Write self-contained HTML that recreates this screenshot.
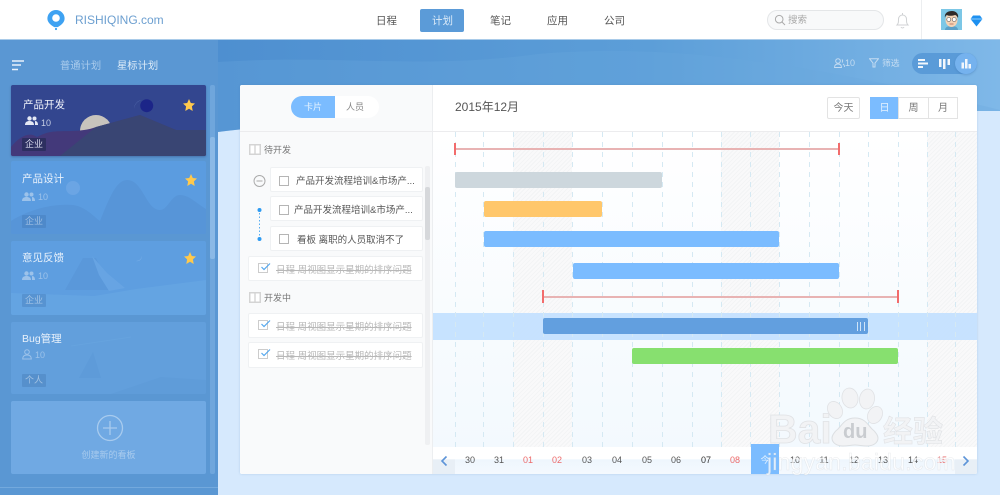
<!DOCTYPE html>
<html lang="zh">
<head>
<meta charset="utf-8">
<title>RISHIQING</title>
<style>
*{box-sizing:border-box;margin:0;padding:0}
html,body{width:1000px;height:495px;overflow:hidden}
body{position:relative;background:#d6e9fd;font-family:"Liberation Sans","Noto Sans CJK SC",sans-serif;color:#555}
.a{position:absolute}
.t{position:absolute;white-space:nowrap;line-height:1}
#top{left:0;top:0;width:1000px;height:40px;background:#fff;border-bottom:1px solid #a9cbe9}
.nav{position:absolute;top:15px;font-size:10.5px;line-height:12px;color:#555;white-space:nowrap}
#side{left:0;top:40px;width:218px;height:455px;background:#5a97d3;overflow:hidden}
.card{position:absolute;left:11px;width:195px;border-radius:2px;overflow:hidden;background:#5b9ce0}
.card>svg{position:absolute;left:0;top:0}
.tag{position:absolute;left:11px;width:24px;height:13px;background:rgba(60,110,170,.3);border-radius:1px;color:rgba(255,255,255,.45);font-size:9px;line-height:13px;text-align:center}
.ct{position:absolute;left:11px;font-size:10.5px;line-height:12px;color:#e8f1fb;white-space:nowrap}
.cn{position:absolute;left:27px;font-size:9px;line-height:10px;color:rgba(255,255,255,.45)}
#panel{left:240px;top:85px;width:737px;height:389px;background:#fff;border-radius:2px;overflow:hidden;box-shadow:0 0 2px rgba(70,120,170,.25)}
#left{left:0;top:0;width:193px;height:389px;background:#f9fafb;border-right:1px solid #eceef0}
.tc{position:absolute;height:25px;background:#fff;border:1px solid #eff1f3;border-radius:2px}
.chk{position:absolute;width:10px;height:10px;border:1px solid #b5b5b5;background:#fff}
.tt{position:absolute;top:8px;font-size:9.5px;line-height:11px;color:#555;white-space:nowrap}
.done{color:#b8b8b8;text-decoration:line-through;font-size:9.5px;line-height:11px;top:8px;left:27px;position:absolute;white-space:nowrap}
.d{position:absolute;top:370px;width:30px;text-align:center;font-size:9px;line-height:10px;color:#555}
.r{color:#ec6a6a}
.vl{position:absolute;top:47px;height:320px;width:1px;background:repeating-linear-gradient(#d5e9f3 0,#d5e9f3 5px,transparent 5px,transparent 10px)}
.hat{position:absolute;top:47px;height:315px;background:repeating-linear-gradient(135deg,#f3f4f5 0,#f3f4f5 1px,#f9f9fa 1px,#f9f9fa 3px)}
.bar{position:absolute;border-radius:2px}
.btn{position:absolute;top:12px;height:22px;border:1px solid #e3e3e3;background:#fff;font-size:10px;line-height:21px;text-align:center;color:#777}
</style>
</head>
<body>
<!-- main background band -->
<svg class="a" style="left:218px;top:40px" width="782" height="100" viewBox="0 0 782 100">
<defs><linearGradient id="bg" x1="0" x2="1" y1="0" y2="0"><stop offset="0" stop-color="#4e8fd0"/><stop offset=".55" stop-color="#5c9ed8"/><stop offset="1" stop-color="#7fb8e8"/></linearGradient></defs>
<path d="M0 0H782V71H400C250 71 100 80 0 92Z" fill="url(#bg)"/>
<path d="M0 22C120 14 200 30 320 14C420 6 540 10 782 70V71H400C250 71 100 80 0 92Z" fill="#6aa8df" opacity=".3"/>
</svg>

<div id="top" class="a">
  <svg class="a" style="left:46px;top:9px" width="20" height="22" viewBox="0 0 20 22">
    <path d="M10 1a8.600 8.600 0 0 0-8.600 8.600c0 4 4 6.800 6.800 8.500h3.600c2.800-1.700 6.800-4.500 6.800-8.500A8.600 8.600 0 0 0 10 1z" fill="#3ea2f2"/>
    <circle cx="10" cy="9" r="3.800" fill="#fff"/><circle cx="10" cy="20" r="1.100" fill="#3ea2f2"/>
  </svg>
  <div class="t" style="left:75px;top:14px;font-size:12px;color:#6c9fd0">RISHIQING.com</div>
  <div class="nav" style="left:376px">日程</div>
  <div class="a" style="left:420px;top:9px;width:44px;height:23px;border-radius:2px;background:#5b9bd8"></div>
  <div class="nav" style="left:432px;color:#dcebf8">计划</div>
  <div class="nav" style="left:490px">笔记</div>
  <div class="nav" style="left:547px">应用</div>
  <div class="nav" style="left:604px">公司</div>
  <div class="a" style="left:767px;top:10px;width:117px;height:20px;border:1px solid #e4e6e8;border-radius:10px;background:#f8f9fa"></div>
  <svg class="a" style="left:774px;top:14px" width="12" height="12" viewBox="0 0 12 12"><circle cx="5.200" cy="5.200" r="3.800" fill="none" stroke="#aaa"/><path d="M8 8l3 3" stroke="#aaa"/></svg>
  <div class="t" style="left:788px;top:16px;font-size:9.500px;color:#aaa">搜索</div>
  <svg class="a" style="left:895px;top:12px" width="15" height="17" viewBox="0 0 15 17"><path d="M2 13c1.500-1.500 1.500-3 1.500-6a4 4 0 0 1 8 0c0 3 0 4.500 1.500 6zM6 15a1.600 1.600 0 0 0 3 0M7.500 1v2" fill="none" stroke="#d0d2d4"/></svg>
  <div class="a" style="left:921px;top:0;width:1px;height:39px;background:#eceef0"></div>
  <svg class="a" style="left:941px;top:9px" width="21" height="21" viewBox="0 0 21 21">
    <rect width="21" height="21" fill="#7cc7e6"/><path d="M4 21c0-3 3-4 6.500-4s6.500 1 6.500 4z" fill="#5aa0c8"/>
    <ellipse cx="10.500" cy="11" rx="6" ry="7" fill="#f4d3b5"/><path d="M4 9c-1-5 3-7 7-7s7 3 6 7c-1-2-2-3-3-3-3 1-7 1-8 0-1 0-2 2-2 3z" fill="#2f2a28"/>
    <circle cx="7.800" cy="10.500" r="2" fill="#fff" stroke="#555" stroke-width=".6"/><circle cx="13.200" cy="10.500" r="2" fill="#fff" stroke="#555" stroke-width=".6"/>
    <path d="M8.500 15h4" stroke="#b06a5a" stroke-width=".8"/>
  </svg>
  <svg class="a" style="left:970px;top:15px" width="13" height="12" viewBox="0 0 13 12"><path d="M3 .5h7L12.500 4 6.500 11.500.5 4z" fill="#1e90f0"/><path d="M.5 4h12" stroke="#a8dcff" stroke-width=".8"/></svg>
</div>

<div id="side" class="a">
  <svg class="a" style="left:12px;top:20px" width="13" height="11" viewBox="0 0 13 11"><path d="M0 1h12M0 5h9M0 9.500h6" stroke="#e8f1fb" stroke-width="1.400"/></svg>
  <div class="t" style="left:60px;top:21px;font-size:10.300px;color:#a9cbec;padding-top:1px">普通计划</div>
  <div class="t" style="left:117px;top:21px;font-size:10.300px;color:#dcebf8;padding-top:1px">星标计划</div>

  <div class="card" style="top:45px;height:71px;background:#33468f;box-shadow:0 1px 2px rgba(40,60,110,.4)">
    <svg width="195" height="71" viewBox="0 0 195 71">
      <path d="M123 24a10 10 0 0 1 8-9 9 9 0 0 0-8 9z" fill="#5f78b8"/>
      <circle cx="135.700" cy="20.700" r="6.500" fill="#1c2588"/>
      <circle cx="85" cy="46" r="16" fill="#c8c4bd"/>
      <path d="M0 62C8 52 18 46 26 52 30 50 34 48 40 47 50 45 70 48 85 42L129 30 165 45H195V71H0Z" fill="#43397a"/>
      <path d="M49 71 85 42 129 30 165 45H195V71Z" fill="#394573"/>
    </svg>
    <div class="ct" style="top:14px;left:12px;color:#f0f3fa">产品开发</div>
    <svg class="a" style="left:14px;top:31px" width="13" height="10" viewBox="0 0 13 10"><circle cx="4.500" cy="2.500" r="2.200" fill="#e4e8f4"/><circle cx="9.500" cy="2.500" r="2" fill="#e4e8f4"/><path d="M0 9c0-3 2-4 4.500-4S9 6 9 9zM10 5c2 0 3 1.500 3 4h-3z" fill="#e4e8f4"/></svg>
    <div class="cn" style="left:30px;top:33px;color:#c6cde4">10</div>
    <div class="tag" style="top:53px;background:rgba(40,45,90,.8);color:#dde">企业</div>
    <svg class="a" style="left:172px;top:14px" width="12" height="12" viewBox="0 0 12 12"><polygon points="6,0 7.800,4 12,4.500 8.900,7.400 9.700,12 6,9.700 2.300,12 3.100,7.400 0,4.500 4.200,4" fill="#ffc94d"/></svg>
  </div>

  <div class="card" style="top:121px;height:73px">
    <svg width="195" height="73" viewBox="0 0 195 73"><circle cx="62" cy="27" r="7" fill="#6ba5e4"/><path d="M0 60C15 50 40 42 62 44 75 46 82 55 89 60 98 38 105 19 116 19 132 19 135 49 149 49 157 49 160 34 169 34 178 34 185 42 195 48V73H0Z" fill="#5795d8"/></svg>
    <div class="ct" style="top:12px">产品设计</div>
    <svg class="a" style="left:11px;top:31px" width="13" height="10" viewBox="0 0 13 10"><circle cx="4.500" cy="2.500" r="2.200" fill="#9cc2ea"/><circle cx="9.500" cy="2.500" r="2" fill="#9cc2ea"/><path d="M0 9c0-3 2-4 4.500-4S9 6 9 9zM10 5c2 0 3 1.500 3 4h-3z" fill="#9cc2ea"/></svg>
    <div class="cn" style="top:31px;color:#9cc2ea">10</div>
    <div class="tag" style="top:54px">企业</div>
    <svg class="a" style="left:174px;top:13px" width="12" height="12" viewBox="0 0 12 12"><polygon points="6,0 7.800,4 12,4.500 8.900,7.400 9.700,12 6,9.700 2.300,12 3.100,7.400 0,4.500 4.200,4" fill="#ffc94d"/></svg>
  </div>

  <div class="card" style="top:201px;height:74px;background:#5e9ee0">
    <svg width="195" height="74" viewBox="0 0 195 74"><path d="M54 49 72 17 85 17 100 49Z" fill="#5a98da"/><path d="M81 15 96 32 114 47 98 50 88 34Z" fill="#67a4e3"/><path d="M0 52 83 55 125 48 195 39V74H0Z" fill="#64a4e2"/><path d="M125 20a5 5 0 0 0 6-5 6 6 0 0 1-6 5z" fill="#7bb0e8"/></svg>
    <div class="ct" style="top:11px">意见反馈</div>
    <svg class="a" style="left:11px;top:30px" width="13" height="10" viewBox="0 0 13 10"><circle cx="4.500" cy="2.500" r="2.200" fill="#9cc2ea"/><circle cx="9.500" cy="2.500" r="2" fill="#9cc2ea"/><path d="M0 9c0-3 2-4 4.500-4S9 6 9 9zM10 5c2 0 3 1.500 3 4h-3z" fill="#9cc2ea"/></svg>
    <div class="cn" style="top:30px;color:#9cc2ea">10</div>
    <div class="tag" style="top:53px">企业</div>
    <svg class="a" style="left:173px;top:11px" width="12" height="12" viewBox="0 0 12 12"><polygon points="6,0 7.800,4 12,4.500 8.900,7.400 9.700,12 6,9.700 2.300,12 3.100,7.400 0,4.500 4.200,4" fill="#ffc94d"/></svg>
  </div>

  <div class="card" style="top:282px;height:72px;background:#629fdc">
    <svg width="195" height="72" viewBox="0 0 195 72"><path d="M68 56 82 30 90 56Z" fill="#5e9bd9"/><path d="M60 24 120 15" stroke="#66a3de"/><path d="M100 72 150 55 195 58V72Z" fill="#5f9cd9"/></svg>
    <div class="ct" style="top:11px">Bug管理</div>
    <svg class="a" style="left:11px;top:27px" width="10" height="11" viewBox="0 0 10 11"><circle cx="5" cy="3" r="2.300" fill="none" stroke="#9cc2ea"/><path d="M.7 10c0-3 2-4 4.300-4s4.300 1 4.300 4z" fill="none" stroke="#9cc2ea"/></svg>
    <div class="cn" style="left:24px;top:28px;color:#9cc2ea">10</div>
    <div class="tag" style="top:52px">个人</div>
  </div>

  <div class="card" style="top:361px;height:73px;background:#70a9e3">
    <svg width="195" height="50" viewBox="0 0 195 50"><circle cx="99" cy="27" r="12.500" fill="none" stroke="#a8cbee" stroke-width="1.300"/><path d="M99 20v14M92 27h14" stroke="#a8cbee" stroke-width="1.300"/></svg>
    <div class="t" style="left:0;width:195px;text-align:center;top:50px;font-size:9px;color:#a8cbee">创建新的看板</div>
  </div>

  <div class="a" style="left:210px;top:45px;width:5px;height:389px;background:#6fa6dc;border-radius:2px"></div>
  <div class="a" style="left:210px;top:97px;width:5px;height:122px;background:#8bb9e6;border-radius:2px"></div>
  <div class="a" style="left:0;top:447px;width:218px;height:1px;background:#73a9dd"></div>
</div>

<!-- toolbar -->
<svg class="a" style="left:834px;top:58px" width="11" height="10" viewBox="0 0 11 10"><circle cx="4" cy="3" r="2.300" fill="none" stroke="#c4dcf2"/><path d="M.5 9.500C.5 7 2 6 4 6s3.500 1 3.500 3.500zM8 1.500a2 2 0 0 1 0 3M9 6c1 .5 1.500 2 1.500 3" fill="none" stroke="#c4dcf2" stroke-width=".9"/></svg>
<div class="t" style="left:845px;top:59px;font-size:9px;color:#c4dcf2">10</div>
<svg class="a" style="left:869px;top:58px" width="10" height="10" viewBox="0 0 10 10"><path d="M.5 .7h9L6 5v4H4V5z" fill="none" stroke="#c4dcf2"/></svg>
<div class="t" style="left:882px;top:59px;font-size:8.800px;color:#c4dcf2">筛选</div>
<div class="a" style="left:912px;top:53px;width:65px;height:21px;border-radius:11px;background:#5a9bd8"></div>
<div class="a" style="left:955px;top:53px;width:22px;height:21px;border-radius:50%;background:#75b2ee;box-shadow:0 1px 2px rgba(50,100,160,.3)"></div>
<svg class="a" style="left:917px;top:58px" width="55" height="11" viewBox="0 0 55 11" fill="#f2f7fc">
  <rect x="1" y="1" width="7" height="2"/><rect x="1" y="4.500" width="10" height="2"/><rect x="1" y="8" width="5" height="2"/>
  <rect x="22" y="1" width="2.500" height="8"/><rect x="26" y="1" width="2.500" height="10"/><rect x="30.500" y="1" width="2.500" height="6"/>
  <rect x="44.500" y="4.500" width="2.500" height="6"/><rect x="48" y="1" width="2.500" height="9.500"/><rect x="51.500" y="6" width="2.500" height="4.500"/>
</svg>

<div id="panel" class="a">
  <div id="left" class="a">
    <div class="a" style="left:0;top:46px;width:193px;height:1px;background:#ececee"></div>
    <div class="a" style="left:51px;top:11px;width:88px;height:22px;border-radius:11px;background:#fff"></div>
    <div class="a" style="left:51px;top:11px;width:44px;height:22px;border-radius:11px 0 0 11px;background:#7bbcff;color:#e6f3ff;font-size:9px;line-height:22px;text-align:center">卡片</div>
    <div class="t" style="left:106px;top:18px;font-size:9px;color:#888">人员</div>

    <svg class="a" style="left:9px;top:59px" width="12" height="11" viewBox="0 0 12 11"><rect width="12" height="11" fill="#d4d4d4"/><rect x="1.500" y="1.500" width="3.800" height="8" fill="#fff"/><rect x="6.700" y="1.500" width="3.800" height="8" fill="#fff"/></svg>
    <div class="t" style="left:24px;top:61px;font-size:9px;color:#777">待开发</div>

    <svg class="a" style="left:13px;top:89px" width="14" height="70" viewBox="0 0 14 70"><circle cx="6.500" cy="7" r="5.500" fill="none" stroke="#aaa"/><path d="M3.500 7h6" stroke="#aaa"/><circle cx="6.500" cy="36" r="2" fill="#2e9bf2"/><circle cx="6.500" cy="65" r="2" fill="#2e9bf2"/><path d="M6.500 39v24" stroke="#5aaef0" stroke-dasharray="1.500 2"/></svg>

    <div class="tc" style="left:30px;top:82px;width:153px"><div class="chk" style="left:8px;top:8px"></div><div class="tt" style="left:25px">产品开发流程培训&amp;市场产...</div></div>
    <div class="tc" style="left:30px;top:111px;width:153px"><div class="chk" style="left:8px;top:8px"></div><div class="tt" style="left:23px">产品开发流程培训&amp;市场产...</div></div>
    <div class="tc" style="left:30px;top:141px;width:153px"><div class="chk" style="left:8px;top:7px"></div><div class="tt" style="left:26px">看板 离职的人员取消不了</div></div>

    <div class="tc" style="left:8px;top:171px;width:175px"><div class="chk" style="left:9px;top:6px;border-color:#ccc"></div><svg class="a" style="left:11px;top:5px" width="11" height="9" viewBox="0 0 11 9"><path d="M1.500 5l2.500 2.500L10 1.500" fill="none" stroke="#55a8ee" stroke-width="1.200"/></svg><div class="done">日程 周视图显示星期的排序问题</div></div>

    <svg class="a" style="left:9px;top:207px" width="12" height="11" viewBox="0 0 12 11"><rect width="12" height="11" fill="#d4d4d4"/><rect x="1.500" y="1.500" width="3.800" height="8" fill="#fff"/><rect x="6.700" y="1.500" width="3.800" height="8" fill="#fff"/></svg>
    <div class="t" style="left:24px;top:209px;font-size:9px;color:#777">开发中</div>

    <div class="tc" style="left:8px;top:228px;width:175px"><div class="chk" style="left:9px;top:6px;border-color:#ccc"></div><svg class="a" style="left:11px;top:5px" width="11" height="9" viewBox="0 0 11 9"><path d="M1.500 5l2.500 2.500L10 1.500" fill="none" stroke="#55a8ee" stroke-width="1.200"/></svg><div class="done">日程 周视图显示星期的排序问题</div></div>
    <div class="tc" style="left:8px;top:257px;width:175px;height:26px"><div class="chk" style="left:9px;top:6px;border-color:#ccc"></div><svg class="a" style="left:11px;top:5px" width="11" height="9" viewBox="0 0 11 9"><path d="M1.500 5l2.500 2.500L10 1.500" fill="none" stroke="#55a8ee" stroke-width="1.200"/></svg><div class="done">日程 周视图显示星期的排序问题</div></div>

    <div class="a" style="left:185px;top:81px;width:5px;height:279px;background:#eff0f2;border-radius:2px"></div>
    <div class="a" style="left:185px;top:102px;width:5px;height:53px;background:#d6d8db;border-radius:2px"></div>
  </div>

  <!-- right header -->
  <div class="t" style="left:215px;top:16px;font-size:12px;color:#555">2015年12月</div>
  <div class="btn" style="left:587px;width:33px;border-radius:2px">今天</div>
  <div class="btn" style="left:630px;width:29px;background:#7bbcff;border-color:#7bbcff;color:#e6f3ff">日</div>
  <div class="btn" style="left:658px;width:31px">周</div>
  <div class="btn" style="left:688px;width:30px">月</div>
  <div class="a" style="left:193px;top:46px;width:544px;height:1px;background:#ececee"></div>

  <!-- chart background -->
  <div class="a" style="left:193px;top:47px;width:544px;height:315px;background:linear-gradient(#fff,#f3f9fe)"></div>
  <div class="hat" style="left:273px;width:59px"></div>
  <div class="hat" style="left:481px;width:58px"></div>
  <div class="hat" style="left:687px;width:50px"></div>

  <!-- highlight row -->
  <div class="a" style="left:193px;top:228px;width:544px;height:27px;background:rgba(190,222,255,.85)"></div>

  <!-- date row background -->
  <div class="a" style="left:193px;top:362px;width:544px;height:27px;background:linear-gradient(#fff 0,#fff 45%,#eef6fd 46%,#f4f9fe 100%)"></div>
  <div class="a" style="left:193px;top:362px;width:22px;height:27px;background:linear-gradient(#fff 0,#fff 45%,#e8eff6 46%)"></div>
  <div class="a" style="left:715px;top:362px;width:22px;height:27px;background:linear-gradient(#fff 0,#fff 45%,#e8eff6 46%)"></div>

  <div class="vl" style="left:215px"></div><div class="vl" style="left:243px"></div><div class="vl" style="left:273px"></div><div class="vl" style="left:303px"></div><div class="vl" style="left:332px"></div><div class="vl" style="left:362px"></div><div class="vl" style="left:392px"></div><div class="vl" style="left:422px"></div><div class="vl" style="left:452px"></div><div class="vl" style="left:481px"></div><div class="vl" style="left:510px"></div><div class="vl" style="left:539px"></div><div class="vl" style="left:569px"></div><div class="vl" style="left:599px"></div><div class="vl" style="left:628px"></div><div class="vl" style="left:658px"></div><div class="vl" style="left:687px"></div><div class="vl" style="left:715px"></div>

  <!-- bars -->
  <div class="a" style="left:215px;top:63px;width:384px;height:2px;background:#e8b3b3"></div>
  <div class="a" style="left:214px;top:58px;width:2px;height:12px;background:#f26c6c"></div>
  <div class="a" style="left:598px;top:58px;width:2px;height:12px;background:#f26c6c"></div>
  <div class="bar" style="left:215px;top:87px;width:207px;height:16px;background:#cdd7dd"></div>
  <div class="bar" style="left:244px;top:116px;width:118px;height:16px;background:#ffc76b"></div>
  <div class="bar" style="left:244px;top:146px;width:295px;height:16px;background:#7bbcff"></div>
  <div class="bar" style="left:333px;top:178px;width:266px;height:16px;background:#7bbcff"></div>
  <div class="a" style="left:303px;top:211px;width:355px;height:2px;background:#e8b3b3"></div>
  <div class="a" style="left:302px;top:205px;width:2px;height:13px;background:#f26c6c"></div>
  <div class="a" style="left:657px;top:205px;width:2px;height:13px;background:#f26c6c"></div>
  <div class="bar" style="left:303px;top:233px;width:325px;height:16px;background:#629fdf"></div>
  <div class="a" style="left:617px;top:237px;width:8px;height:9px;border-left:1px solid #cfe4f8;border-right:1px solid #cfe4f8"><div class="a" style="left:2px;top:0;width:1px;height:9px;background:#cfe4f8"></div></div>
  <div class="bar" style="left:392px;top:263px;width:266px;height:16px;background:#87e06f"></div>

  <!-- date row -->
  <svg class="a" style="left:200px;top:370px" width="8" height="12" viewBox="0 0 8 12"><path d="M6.500 1.500 2 6l4.500 4.500" fill="none" stroke="#5d94d8" stroke-width="1.600"/></svg>
  <svg class="a" style="left:722px;top:370px" width="8" height="12" viewBox="0 0 8 12"><path d="M1.500 1.500 6 6l-4.500 4.500" fill="none" stroke="#5d94d8" stroke-width="1.600"/></svg>
  <div class="a" style="left:511px;top:359px;width:28px;height:30px;background:#7bbcff"></div>
  <div class="d" style="left:215px">30</div><div class="d" style="left:244px">31</div><div class="d r" style="left:273px">01</div><div class="d r" style="left:302px">02</div><div class="d" style="left:332px">03</div><div class="d" style="left:362px">04</div><div class="d" style="left:392px">05</div><div class="d" style="left:421px">06</div><div class="d" style="left:451px;color:#333">07</div><div class="d r" style="left:480px">08</div><div class="d" style="left:510px;color:#e6f3ff">今</div><div class="d" style="left:540px">10</div><div class="d" style="left:569px">11</div><div class="d" style="left:599px">12</div><div class="d" style="left:628px">13</div><div class="d" style="left:658px">14</div><div class="d r" style="left:687px">15</div>
</div>

<!-- watermark -->
<svg class="a" style="left:765px;top:385px" width="235" height="110" viewBox="0 0 235 110">
  <g fill="#f2f3f5" stroke="#e0e2e5" stroke-width=".8">
    <ellipse cx="85" cy="13" rx="8" ry="10" transform="rotate(-10 85 13)"/><ellipse cx="102" cy="14" rx="7.500" ry="10" transform="rotate(10 102 14)"/><ellipse cx="70" cy="25" rx="7" ry="9" transform="rotate(-30 70 25)"/><ellipse cx="110" cy="30" rx="7" ry="9" transform="rotate(30 110 30)"/>
  </g>
  <path d="M90 33c-10 0-13 7-17 11-4 3-6 7-6 9 0 5 5 8 11 8 5 0 8-1 12-1s7 1 12 1c6 0 11-3 11-8 0-2-2-6-6-9-4-4-7-11-17-11z" fill="#f2f3f5" stroke="#dcdfe2" stroke-width="1"/>
  <text x="3" y="58" font-family="Liberation Sans,sans-serif" font-weight="700" font-size="41" fill="#f2f3f5" stroke="#e0e2e5" stroke-width=".8">Bai</text>
  <text x="78" y="53" font-family="Liberation Sans,sans-serif" font-weight="700" font-size="20" fill="#c9ccd0">du</text>
  <text x="118" y="57" font-family="Liberation Sans,Noto Sans CJK SC,sans-serif" font-weight="700" font-size="30" fill="#f2f3f5" stroke="#e0e2e5" stroke-width=".6">经验</text>
  <text x="2" y="85" font-family="Liberation Sans,sans-serif" font-size="23" letter-spacing=".2" fill="rgba(255,255,255,.75)" stroke="rgba(200,205,210,.4)" stroke-width=".5">jingyan.baidu.com</text>
</svg>
</body>
</html>
